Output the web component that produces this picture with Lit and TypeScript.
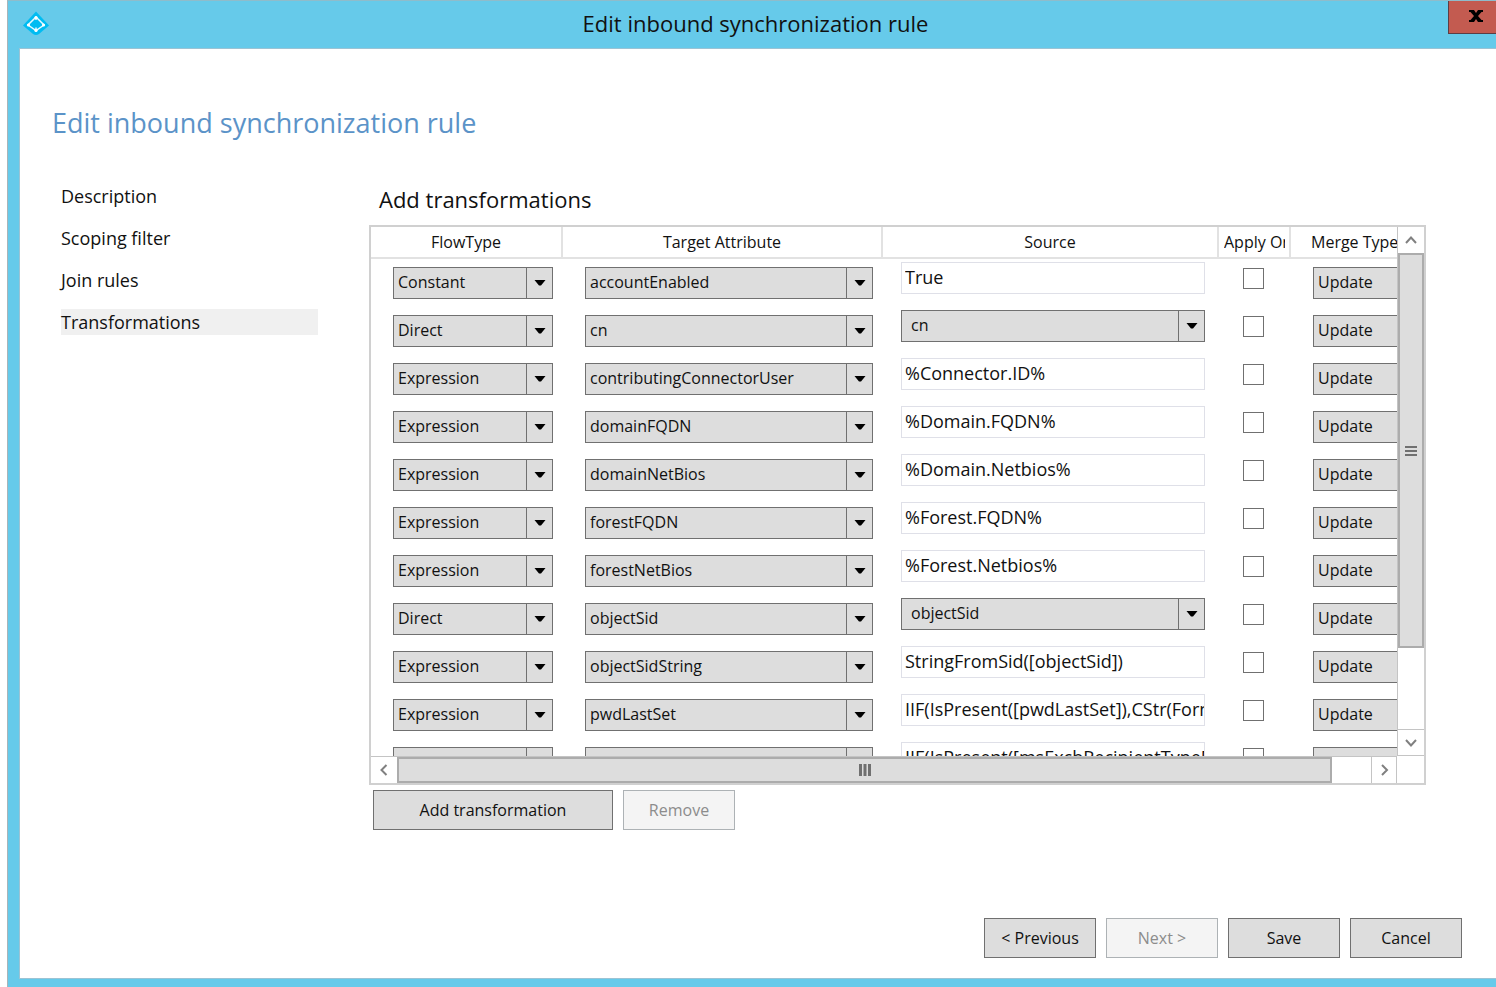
import { LitElement, html, css, svg } from "lit";
import { customElement, property } from "lit/decorators.js";

interface Rule {
  flow: string;
  target: string;
  source: string;
}

const RULES: Rule[] = [
  { flow: "Constant", target: "accountEnabled", source: "True" },
  { flow: "Direct", target: "cn", source: "cn" },
  { flow: "Expression", target: "contributingConnectorUser", source: "%Connector.ID%" },
  { flow: "Expression", target: "domainFQDN", source: "%Domain.FQDN%" },
  { flow: "Expression", target: "domainNetBios", source: "%Domain.Netbios%" },
  { flow: "Expression", target: "forestFQDN", source: "%Forest.FQDN%" },
  { flow: "Expression", target: "forestNetBios", source: "%Forest.Netbios%" },
  { flow: "Direct", target: "objectSid", source: "objectSid" },
  { flow: "Expression", target: "objectSidString", source: "StringFromSid([objectSid])" },
  { flow: "Expression", target: "pwdLastSet", source: "IIF(IsPresent([pwdLastSet]),CStr(FormatDateTime([pwdLastSet])))" },
  { flow: "Expression", target: "sourceAnchor", source: "IIF(IsPresent([msExchRecipientTypeDetails]),[mail],NULL)" },
];

const STEPS = ["Description", "Scoping filter", "Join rules", "Transformations"];

@customElement("combo-box")
export class ComboBox extends LitElement {
  static styles = css`
    :host {
      display: grid;
      height: 32px;
    }
    .field {
      grid-area: 1 / 1;
      appearance: none;
      box-sizing: border-box;
      width: 100%;
      height: 32px;
      margin: 0;
      padding: 0 28px 2px 4px;
      border: 1px solid #707070;
      border-radius: 0;
      background: #dddddd;
      color: #111;
      font: inherit;
    }
    :host([inset]) .field {
      padding-left: 9px;
    }
    .arrow {
      grid-area: 1 / 1;
      justify-self: end;
      display: grid;
      place-items: center;
      box-sizing: border-box;
      width: 27px;
      border-left: 1px solid #707070;
      pointer-events: none;
    }
  `;

  @property() value = "";
  @property() name = "";
  @property({ type: Boolean, reflect: true }) inset = false;

  render() {
    return html`
      <select class="field" aria-label=${this.name}>
        <option>${this.value}</option>
      </select>
      <span class="arrow">
        <svg width="12" height="8" viewBox="0 0 12 8"><path d="M0.5 1h11L7 6.5H5z" fill="#000" /></svg>
      </span>
    `;
  }
}

const chevron = (d: string) =>
  html`<svg width="14" height="14" viewBox="0 0 14 14" fill="none" stroke="#808080" stroke-width="2">
    ${svg`<path d=${d} />`}
  </svg>`;

@customElement("app-root")
export class AppRoot extends LitElement {
  static styles = css`
    :host {
      display: block;
      box-sizing: border-box;
      height: 100vh;
      min-height: 640px;
      padding-left: 7px;
      background: #fff;
      color: #111;
      font-family: "Open Sans", "Noto Sans", sans-serif;
      font-size: 16px;
      line-height: 20px;
    }
    .window {
      display: flex;
      flex-direction: column;
      box-sizing: border-box;
      height: 100%;
      border-top: 1px solid #8fbccb;
      border-left: 1px solid #a9b4b8;
      background: #66caea;
    }
    .titlebar {
      display: flex;
      height: 47px;
    }
    .logo {
      flex: none;
      margin: 10px 0 0 15px;
    }
    .caption {
      flex: 1;
      padding: 7px 0 0 14px;
      text-align: center;
      font-size: 22px;
      line-height: 30px;
    }
    .close {
      display: grid;
      place-items: center;
      width: 48px;
      height: 33px;
      padding: 0 0 2px 7px;
      border: 1px solid #5d3d44;
      border-width: 0 0 1px 1px;
      background: #c35b50;
    }
    .body {
      display: flex;
      flex-direction: column;
      flex: 1;
      min-height: 0;
      box-sizing: border-box;
      margin: 0 0 8px 11px;
      padding: 54px 34px 20px 32px;
      border: 1px solid #9cc3d4;
      border-right: 0;
      background: #fff;
    }
    .heading {
      margin: 0;
      color: #5b93c8;
      font-size: 27px;
      font-weight: 400;
      line-height: 40px;
    }
    .columns {
      display: flex;
      flex: 1;
      gap: 51px;
      min-height: 0;
      padding: 40px 36px 0 9px;
    }
    .steps {
      display: flex;
      flex-direction: column;
      gap: 16px;
      width: 257px;
    }
    .step {
      color: #111;
      font-size: 18px;
      line-height: 26px;
      text-decoration: none;
    }
    .step.current {
      background: #f0f0f0;
    }
    .panel {
      display: flex;
      flex-direction: column;
      flex: 1;
      min-width: 0;
    }
    .subheading {
      margin: 0 0 10px;
      padding: 0 0 0 10px;
      font-size: 22px;
      font-weight: 400;
      line-height: 32px;
    }
    .frame {
      display: grid;
      grid-template-columns: minmax(0, 1fr) 27px;
      grid-template-rows: minmax(0, 1fr) 27px;
      flex: 1;
      min-height: 0;
      border: 2px solid #d0d0d0;
    }
    .viewport {
      overflow: auto;
      scrollbar-width: none;
    }
    .grid {
      width: 1070px;
      table-layout: fixed;
      border-collapse: separate;
      border-spacing: 0;
    }
    .w-flow {
      width: 192px;
    }
    .w-target {
      width: 320px;
    }
    .w-source {
      width: 336px;
    }
    .w-apply {
      width: 72px;
    }
    .th {
      position: sticky;
      top: 0;
      z-index: 1;
      box-sizing: border-box;
      height: 32px;
      padding: 0;
      border-right: 2px solid #e2e2e2;
      border-bottom: 2px solid #e2e2e2;
      background: #fff;
      font-weight: 400;
      white-space: nowrap;
      overflow: hidden;
    }
    .th.start {
      text-align: left;
      padding: 0 4px 0 5px;
    }
    .th.merge {
      padding-left: 20px;
    }
    .clip {
      display: block;
      overflow: hidden;
    }
    .td {
      box-sizing: border-box;
      height: 48px;
      padding: 8px 10px 0 22px;
      vertical-align: top;
    }
    .td.source {
      padding: 3px 14px 0 18px;
    }
    .td.apply {
      padding: 9px 0 0 24px;
    }
    .td.merge {
      padding-right: 14px;
    }
    .text {
      display: block;
      box-sizing: border-box;
      width: 100%;
      height: 32px;
      margin: 0;
      padding: 0 0 2px 3px;
      border: 1px solid #dfe0e8;
      background: #fff;
      color: #111;
      font: inherit;
      font-size: 18px;
    }
    .check {
      appearance: none;
      display: block;
      box-sizing: border-box;
      width: 21px;
      height: 21px;
      margin: 0;
      border: 1px solid #707070;
      background: #fff;
    }
    .bar {
      display: flex;
      box-sizing: border-box;
      background: #fff;
    }
    .bar.vertical {
      flex-direction: column;
      border-left: 1px solid #c4c4c4;
      border-bottom: 1px solid #c4c4c4;
    }
    .bar.horizontal {
      border-top: 1px solid #c4c4c4;
    }
    .arrow {
      display: grid;
      place-items: center;
      flex: none;
      width: 26px;
      height: 26px;
      padding: 0;
      border: 0 solid #c4c4c4;
      background: #fff;
    }
    .arrow.down {
      border-top-width: 1px;
    }
    .arrow.right {
      border-left-width: 1px;
      border-right-width: 1px;
    }
    .thumb {
      display: grid;
      place-items: center;
      box-sizing: border-box;
      border: 2px solid #acacac;
      background: #dddddd;
    }
    .vertical .thumb {
      flex: 396;
    }
    .vertical .rest {
      flex: 82;
    }
    .horizontal .thumb {
      flex: 934;
    }
    .horizontal .rest {
      flex: 39;
    }
    .actions {
      display: flex;
      gap: 10px;
      padding: 5px 0 0 4px;
    }
    .footer {
      display: flex;
      justify-content: flex-end;
      gap: 10px;
      padding-top: 88px;
    }
    .button {
      box-sizing: border-box;
      width: 112px;
      height: 40px;
      padding: 0;
      border: 1px solid #707070;
      background: #dddddd;
      color: #111;
      font: inherit;
    }
    .button.wide {
      width: 240px;
    }
    .button:disabled {
      border-color: #adb2b5;
      background: #f4f4f4;
      color: #8c8c8c;
    }
  `;

  private row(rule: Rule) {
    return html`
      <tr>
        <td class="td"><combo-box name="Flow type" .value=${rule.flow}></combo-box></td>
        <td class="td"><combo-box name="Target attribute" .value=${rule.target}></combo-box></td>
        <td class="td source">
          ${rule.flow === "Direct"
            ? html`<combo-box inset name="Source" .value=${rule.source}></combo-box>`
            : html`<input class="text" type="text" aria-label="Source" .value=${rule.source} />`}
        </td>
        <td class="td apply"><input class="check" type="checkbox" aria-label="Apply once" /></td>
        <td class="td merge"><combo-box name="Merge type" .value=${"Update"}></combo-box></td>
      </tr>
    `;
  }

  render() {
    return html`
      <div class="window">
        <header class="titlebar">
          <svg class="logo" width="26" height="26" viewBox="0 0 26 26">
            <path d="M13 0.500L26 14.500 16 23Q13 25 10 23L0 14.500z" fill="#00bcf2" />
            <path d="M13 6L5 14 13 19.500 21 14z" fill="none" stroke="#e6faff" stroke-width="1.500" />
            <path d="M13 9.500l4 4.300-4 3.200-4-3.200z" fill="#00bcf2" />
            <path d="M13 6v3M13 16.500v3" stroke="#e6faff" stroke-width="1.500" />
            <circle cx="13" cy="6.500" r="1.600" fill="#fff" />
            <circle cx="5.500" cy="14" r="1.600" fill="#fff" />
            <circle cx="20.500" cy="14" r="1.600" fill="#fff" />
            <circle cx="13" cy="19.500" r="1.600" fill="#fff" />
          </svg>
          <div class="caption">Edit inbound synchronization rule</div>
          <button class="close" type="button" aria-label="Close">
            <svg width="16" height="14" viewBox="0 0 16 14">
              <path d="M1 1h5l2 3 2-3h5v2h-1.500L10 7l3.500 4H15v2h-5L8 10l-2 3H1v-2h1.500L6 7 2.500 3H1z" fill="#000" />
            </svg>
          </button>
        </header>
        <main class="body">
          <h1 class="heading">Edit inbound synchronization rule</h1>
          <div class="columns">
            <nav class="steps">
              ${STEPS.map(
                (step) => html`<a class="step ${step === "Transformations" ? "current" : ""}" href="#">${step}</a>`
              )}
            </nav>
            <section class="panel">
              <h2 class="subheading">Add transformations</h2>
              <div class="frame">
                <div class="viewport">
                  <table class="grid">
                    <colgroup>
                      <col class="w-flow" />
                      <col class="w-target" />
                      <col class="w-source" />
                      <col class="w-apply" />
                      <col />
                    </colgroup>
                    <thead>
                      <tr>
                        <th class="th">FlowType</th>
                        <th class="th">Target Attribute</th>
                        <th class="th">Source</th>
                        <th class="th start"><span class="clip">Apply Once</span></th>
                        <th class="th start merge">Merge Type</th>
                      </tr>
                    </thead>
                    <tbody>
                      ${RULES.map((rule) => this.row(rule))}
                    </tbody>
                  </table>
                </div>
                <div class="bar vertical">
                  <button class="arrow" type="button" aria-label="Scroll up">${chevron("M2 10L7 4.500 12 10")}</button>
                  <div class="thumb">
                    <svg width="12" height="12" viewBox="0 0 12 12"><path d="M0 2h12M0 6h12M0 10h12" stroke="#707070" stroke-width="2" /></svg>
                  </div>
                  <div class="rest"></div>
                  <button class="arrow down" type="button" aria-label="Scroll down">${chevron("M2 4L7 9.500 12 4")}</button>
                </div>
                <div class="bar horizontal">
                  <button class="arrow" type="button" aria-label="Scroll left">${chevron("M9.500 2L4.500 7 9.500 12")}</button>
                  <div class="thumb">
                    <svg width="14" height="12" viewBox="0 0 14 12"><path d="M2.500 0v12M7 0v12M11.500 0v12" stroke="#707070" stroke-width="3" /></svg>
                  </div>
                  <div class="rest"></div>
                  <button class="arrow right" type="button" aria-label="Scroll right">${chevron("M5 2L10 7 5 12")}</button>
                </div>
              </div>
              <div class="actions">
                <button class="button wide" type="button">Add transformation</button>
                <button class="button" type="button" disabled>Remove</button>
              </div>
            </section>
          </div>
          <footer class="footer">
            <button class="button" type="button">&lt; Previous</button>
            <button class="button" type="button" disabled>Next &gt;</button>
            <button class="button" type="button">Save</button>
            <button class="button" type="button">Cancel</button>
          </footer>
        </main>
      </div>
    `;
  }
}
